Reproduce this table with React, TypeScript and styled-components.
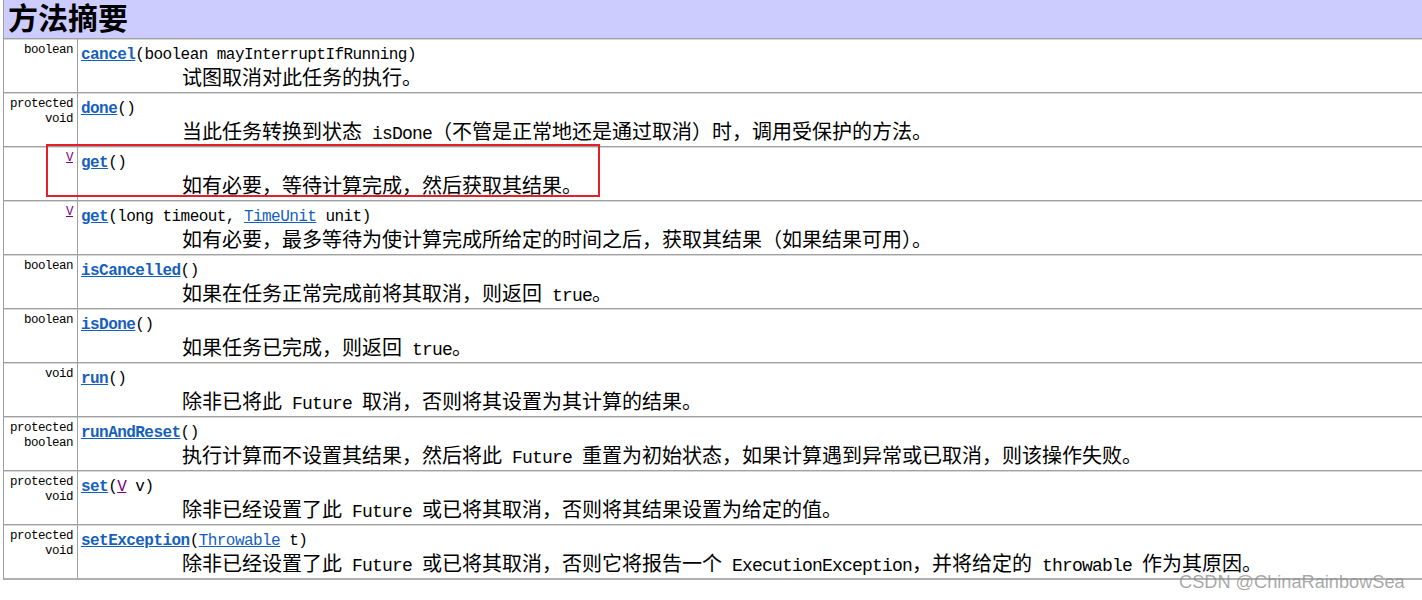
import React from 'react';
import styled, { createGlobalStyle } from 'styled-components';

const GlobalStyle = createGlobalStyle`
  html, body { margin: 0; padding: 0; background: #ffffff; overflow: hidden; }
`;

type Part = string | { link: string } | { tv: string };

interface Method {
  type: Part[];
  name: string;
  params: Part[];
  desc: string;
}

const methods: Method[] = [
  { type: ['boolean'], name: 'cancel', params: ['boolean mayInterruptIfRunning'], desc: '试图取消对此任务的执行。' },
  { type: ['protected', 'void'], name: 'done', params: [], desc: '当此任务转换到状态 isDone（不管是正常地还是通过取消）时，调用受保护的方法。' },
  { type: [{ tv: 'V' }], name: 'get', params: [], desc: '如有必要，等待计算完成，然后获取其结果。' },
  { type: [{ tv: 'V' }], name: 'get', params: ['long timeout, ', { link: 'TimeUnit' }, ' unit'], desc: '如有必要，最多等待为使计算完成所给定的时间之后，获取其结果（如果结果可用）。' },
  { type: ['boolean'], name: 'isCancelled', params: [], desc: '如果在任务正常完成前将其取消，则返回 true。' },
  { type: ['boolean'], name: 'isDone', params: [], desc: '如果任务已完成，则返回 true。' },
  { type: ['void'], name: 'run', params: [], desc: '除非已将此 Future 取消，否则将其设置为其计算的结果。' },
  { type: ['protected', 'boolean'], name: 'runAndReset', params: [], desc: '执行计算而不设置其结果，然后将此 Future 重置为初始状态，如果计算遇到异常或已取消，则该操作失败。' },
  { type: ['protected', 'void'], name: 'set', params: [{ tv: 'V' }, ' v'], desc: '除非已经设置了此 Future 或已将其取消，否则将其结果设置为给定的值。' },
  { type: ['protected', 'void'], name: 'setException', params: [{ link: 'Throwable' }, ' t'], desc: '除非已经设置了此 Future 或已将其取消，否则它将报告一个 ExecutionException，并将给定的 throwable 作为其原因。' },
];

const LINK = '#1560bd';
const VISITED = '#800080';

const Page = styled.div`
  position: relative;
  width: 1422px;
  height: 600px;
  overflow: hidden;
  padding-left: 3px;
  box-sizing: border-box;
  background: #ffffff;
`;

const Table = styled.div`
  width: 1440px;
  border-left: 1px solid #a0a0a0;
  border-bottom: 2px solid #b0b0b0;
`;

const Heading = styled.div`
  height: 38px;
  box-sizing: border-box;
  background: #ccccff;
  padding-left: 4px;
  font-family: "Noto Sans CJK SC", sans-serif;
  font-weight: 700;
  font-size: 30px;
  line-height: 32px;
  color: #000000;
`;

const Row = styled.div`
  display: grid;
  grid-template-columns: 74px 1fr;
  height: 54px;
  box-sizing: border-box;
  border-top: 1px solid #a0a0a0;
  box-shadow: inset 0 1px 0 #d8d8d8;
`;

const TypeCell = styled.div`
  box-sizing: border-box;
  border-right: 1px solid #a0a0a0;
  padding: 4px 4px 0 0;
  text-align: right;
  font-family: "Liberation Mono", monospace;
  font-size: 12.5px;
  letter-spacing: -0.5px;
  line-height: 15px;
  color: #000000;
`;

const TypeLine = styled.div`
  white-space: nowrap;
`;

const SigCell = styled.div`
  padding: 6px 0 0 3px;
  color: #000000;
`;

const Signature = styled.div`
  font-family: "Liberation Mono", monospace;
  font-size: 16px;
  letter-spacing: -0.55px;
  line-height: 20px;
  white-space: pre;
`;

const MethodLink = styled.a`
  color: ${LINK};
  font-weight: 700;
  text-decoration: underline;
`;

const TypeLink = styled.a<{ $visited?: boolean }>`
  color: ${(p) => (p.$visited ? VISITED : LINK)};
  font-weight: 400;
  text-decoration: underline;
`;

const Desc = styled.div`
  padding-left: 101px;
  font-family: "Noto Sans CJK SC", sans-serif;
  font-size: 20px;
  line-height: 24px;
  white-space: nowrap;
`;

const Code = styled.span`
  font-family: "Liberation Mono", monospace;
  font-size: 18px;
  letter-spacing: -0.8px;
  white-space: pre;
`;

const Highlight = styled.div`
  position: absolute;
  left: 46px;
  top: 144px;
  width: 554px;
  height: 53px;
  box-sizing: border-box;
  border: 2px solid #e3202a;
  pointer-events: none;
`;

const Watermark = styled.div`
  position: absolute;
  left: 1179px;
  top: 573px;
  font-family: "Liberation Sans", Arial, sans-serif;
  font-size: 18.2px;
  line-height: 19px;
  color: rgba(140, 140, 140, 0.75);
  white-space: nowrap;
  pointer-events: none;
`;

function renderPart(p: Part, i: number) {
  if (typeof p === 'string') return <React.Fragment key={i}>{p}</React.Fragment>;
  if ('tv' in p) return <TypeLink key={i} $visited href="#">{p.tv}</TypeLink>;
  return <TypeLink key={i} href="#">{p.link}</TypeLink>;
}

function renderDesc(text: string) {
  return text.split(/([\x20-\x7e]+)/).map((s, i) =>
    i % 2 === 1 ? <Code key={i}>{s}</Code> : <React.Fragment key={i}>{s}</React.Fragment>
  );
}

export default function App() {
  return (
    <>
      <GlobalStyle />
      <Page>
        <Table>
          <Heading>方法摘要</Heading>
          {methods.map((m, idx) => (
            <Row key={idx}>
              <TypeCell>
                {m.type.map((t, i) => (
                  <TypeLine key={i}>{renderPart(t, i)}</TypeLine>
                ))}
              </TypeCell>
              <SigCell>
                <Signature>
                  <MethodLink href="#">{m.name}</MethodLink>(
                  {m.params.map(renderPart)})
                </Signature>
                <Desc>{renderDesc(m.desc)}</Desc>
              </SigCell>
            </Row>
          ))}
        </Table>
        <Highlight />
        <Watermark>CSDN @ChinaRainbowSea</Watermark>
      </Page>
    </>
  );
}
